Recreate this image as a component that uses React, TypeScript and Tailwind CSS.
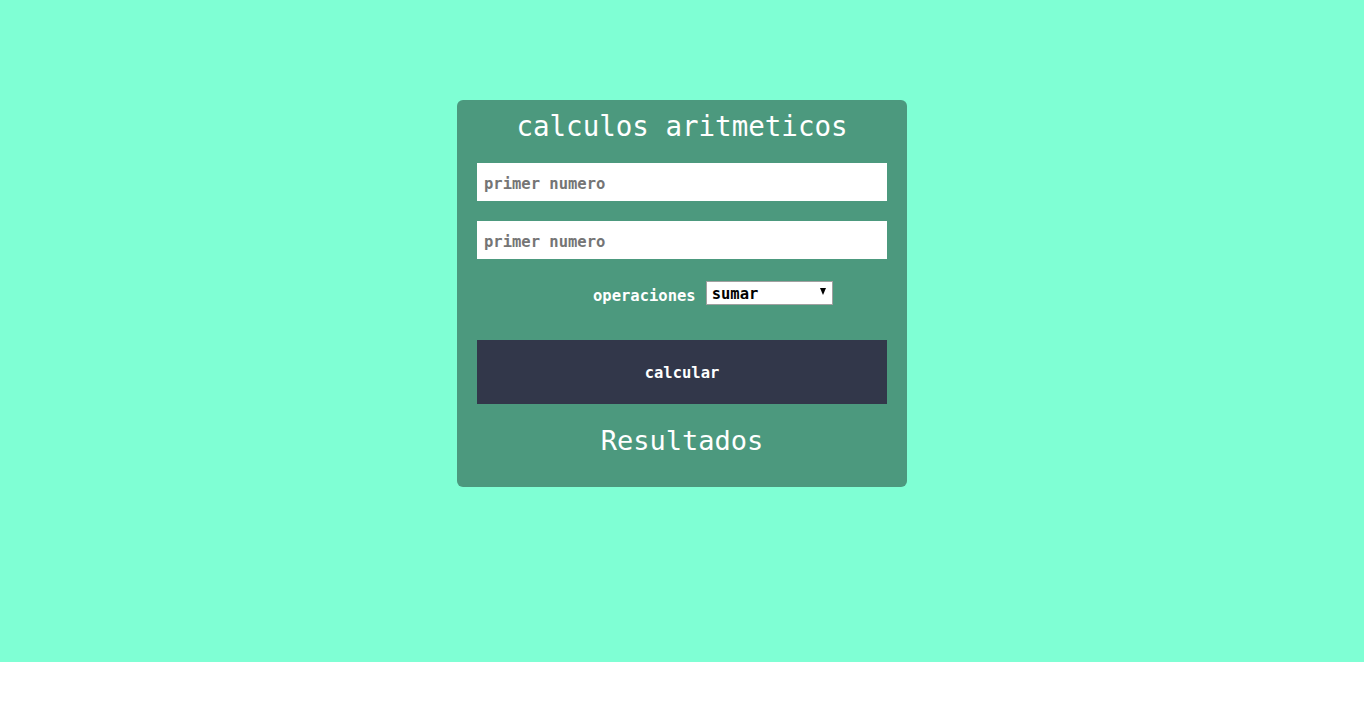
export default function App() {
  const mono = { fontFamily: '"DejaVu Sans Mono", "Liberation Mono", monospace' }
  return (
    <div className="w-full bg-white" style={mono}>
      <section className="flex h-[662px] w-full flex-col items-center bg-[#7fffd4] pt-[100px]">
        <div className="flex w-[450px] flex-col rounded-[6px] bg-[#4c997e] px-5 pt-[9px] pb-[29px]">
          <h1 className="text-center text-[27.5px] leading-[34px] text-white">
            calculos aritmeticos
          </h1>

          <input
            type="text"
            placeholder="primer numero"
            className="mt-5 h-[38px] w-full bg-white px-[7px] pt-1 text-[15.5px] font-bold text-black outline-none placeholder:text-[#757575]"
          />
          <input
            type="text"
            placeholder="primer numero"
            className="mt-5 h-[38px] w-full bg-white px-[7px] pt-1 text-[15.5px] font-bold text-black outline-none placeholder:text-[#757575]"
          />

          <div className="mt-[22px] flex h-6 items-start pl-[116px]">
            <label className="text-[15.5px] leading-[30px] font-bold whitespace-nowrap text-white">
              operaciones
            </label>
            <div className="relative ml-[10px] h-6 w-[127px] border border-[#a0a0a0] bg-white">
              <select className="h-full w-full appearance-none bg-transparent pt-[3px] pl-[5px] text-[15.5px] leading-[19px] font-bold text-black outline-none">
                <option>sumar</option>
                <option>restar</option>
                <option>multiplicar</option>
                <option>dividir</option>
              </select>
              <span className="pointer-events-none absolute top-[6px] right-[6px] h-0 w-0 border-x-[3.5px] border-t-[7px] border-x-transparent border-t-black" />
            </div>
          </div>

          <button className="mt-[35px] h-16 w-full bg-[#32374a] pt-[3px] text-[15.5px] font-bold text-white">
            calcular
          </button>

          <h2 className="mt-5 text-center text-[27px] leading-[34px] text-white">Resultados</h2>
        </div>
      </section>
      <div className="h-10 w-full bg-white" />
    </div>
  )
}
